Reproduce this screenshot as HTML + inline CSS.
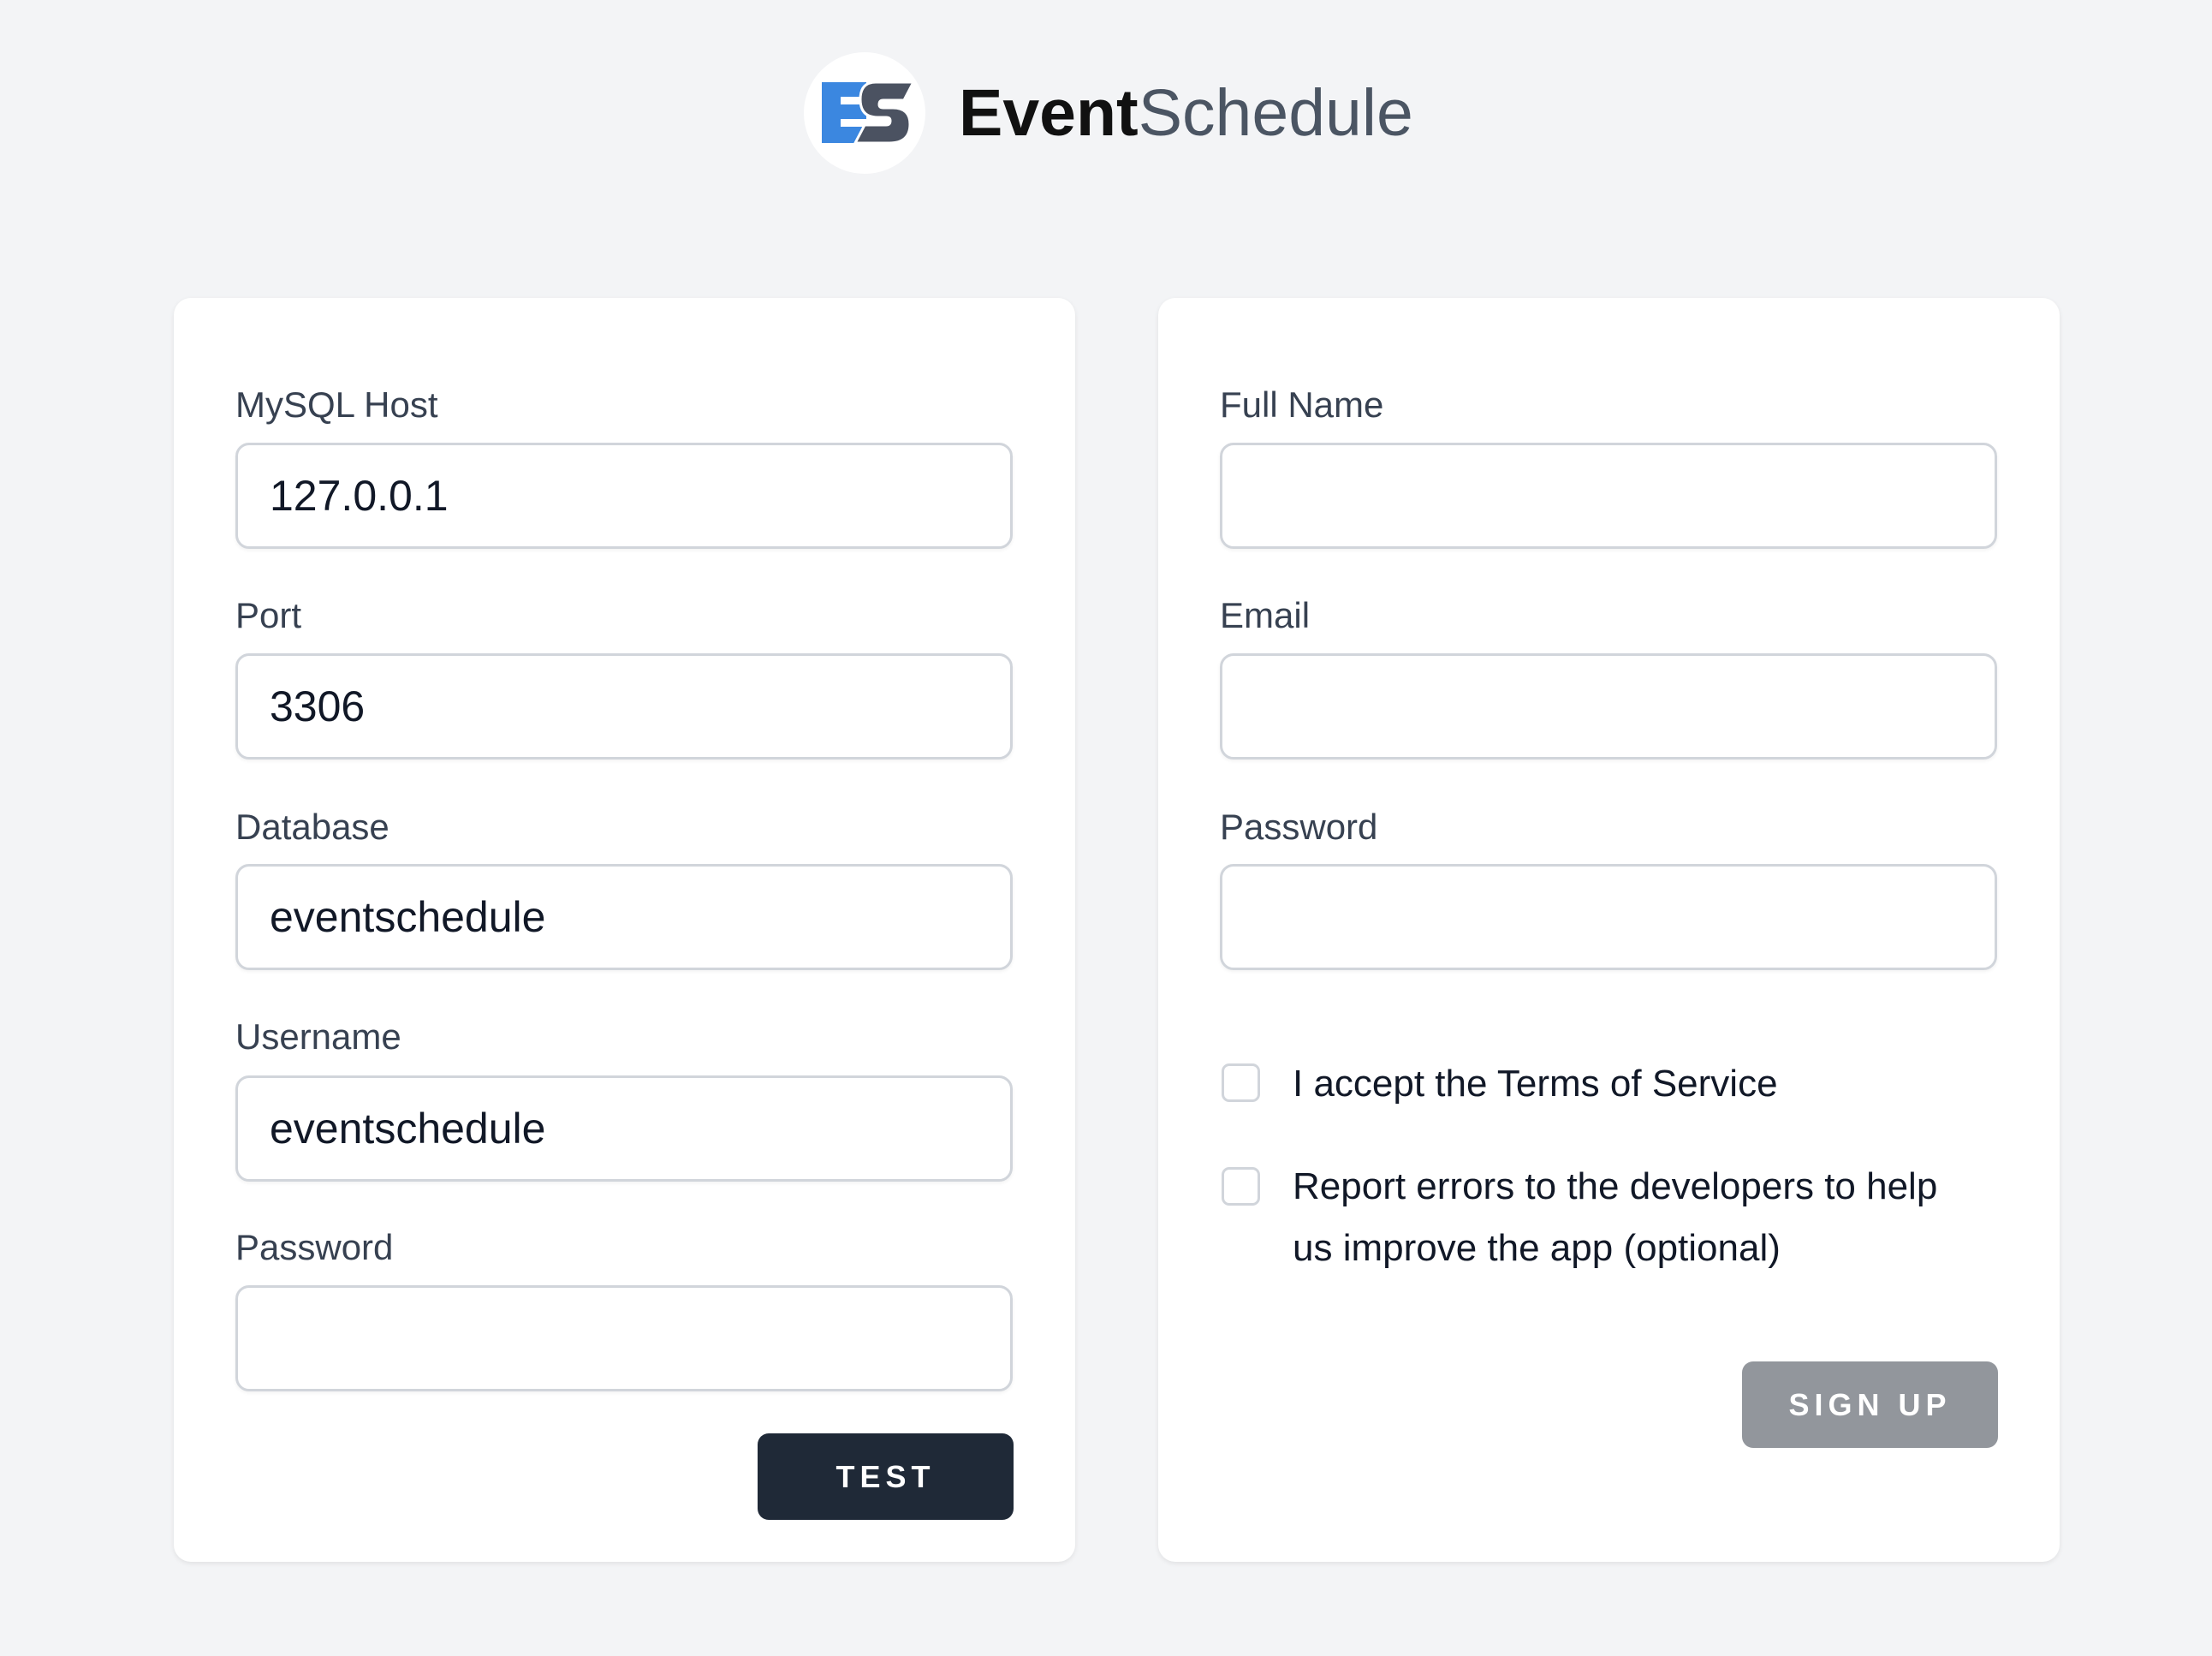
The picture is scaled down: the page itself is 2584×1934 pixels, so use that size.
<!DOCTYPE html>
<html><head><meta charset="utf-8">
<style>
*{box-sizing:border-box;margin:0;padding:0}
body{width:2584px;height:1934px;background:#f3f4f6;font-family:"Liberation Sans",sans-serif;position:relative;overflow:hidden}
.logo{position:absolute;left:939px;top:61px;width:142px;height:142px;border-radius:50%;background:#fff}
.brand{position:absolute;left:1120px;top:84px;font-size:77px;line-height:96px;color:#4b5563;white-space:nowrap}
.brand b{color:#111;font-weight:700}
.card{position:absolute;top:348px;width:1053px;height:1476px;background:#fff;border-radius:20px;box-shadow:0 2px 6px rgba(0,0,0,.08)}
.lbl{position:absolute;left:72px;font-size:42px;color:#374151;line-height:48px}
.inp{position:absolute;left:72px;width:908px;height:124px;border:3px solid #d1d5db;border-radius:16px;box-shadow:0 2px 4px rgba(0,0,0,.05);font-size:50px;color:#111827;padding-left:37px;line-height:118px}
.btn{position:absolute;height:101px;width:299px;border-radius:13px;color:#fff;font-size:36px;font-weight:700;letter-spacing:6px;text-align:center;line-height:101px}
.cb{position:absolute;left:74px;width:45px;height:45px;border:3px solid #d1d5db;border-radius:9px}
.ct{position:absolute;left:157px;font-size:44px;color:#111827;line-height:72px;white-space:nowrap}
</style></head><body>
<div class="logo">
<svg width="142" height="142" viewBox="0 0 142 142">
<rect x="21" y="35" width="52" height="71" fill="#3b87e0"/>
<rect x="43" y="52" width="40" height="9" fill="#fff"/>
<rect x="43" y="78" width="40" height="9" fill="#fff"/>
<path d="M84 35H128L117 56H93Q88 56 88 61Q88 65 93 65H104Q124 65 124 84Q124 106 100 106H60L71 85H96Q101 85 101 80Q101 76 96 76H86Q66 76 66 55Q66 35 84 35Z" fill="#4b5261" stroke="#fff" stroke-width="3"/>
</svg>
</div>
<div class="brand"><b>Event</b>Schedule</div>

<div class="card" style="left:203px">
<div class="lbl" style="top:101px">MySQL Host</div>
<div class="inp" style="top:169px">127.0.0.1</div>
<div class="lbl" style="top:347px">Port</div>
<div class="inp" style="top:415px">3306</div>
<div class="lbl" style="top:594px">Database</div>
<div class="inp" style="top:661px">eventschedule</div>
<div class="lbl" style="top:839px">Username</div>
<div class="inp" style="top:908px">eventschedule</div>
<div class="lbl" style="top:1085px">Password</div>
<div class="inp" style="top:1153px"></div>
<div class="btn" style="left:682px;top:1326px;background:#1f2937">TEST</div>
</div>

<div class="card" style="left:1353px">
<div class="lbl" style="top:101px">Full Name</div>
<div class="inp" style="top:169px"></div>
<div class="lbl" style="top:347px">Email</div>
<div class="inp" style="top:415px"></div>
<div class="lbl" style="top:594px">Password</div>
<div class="inp" style="top:661px"></div>
<div class="cb" style="top:894px"></div>
<div class="ct" style="top:882px">I accept the Terms of Service</div>
<div class="cb" style="top:1015px"></div>
<div class="ct" style="top:1002px">Report errors to the developers to help<br>us improve the app (optional)</div>
<div class="btn" style="left:682px;top:1242px;background:#92969c">SIGN UP</div>
</div>
</body></html>
